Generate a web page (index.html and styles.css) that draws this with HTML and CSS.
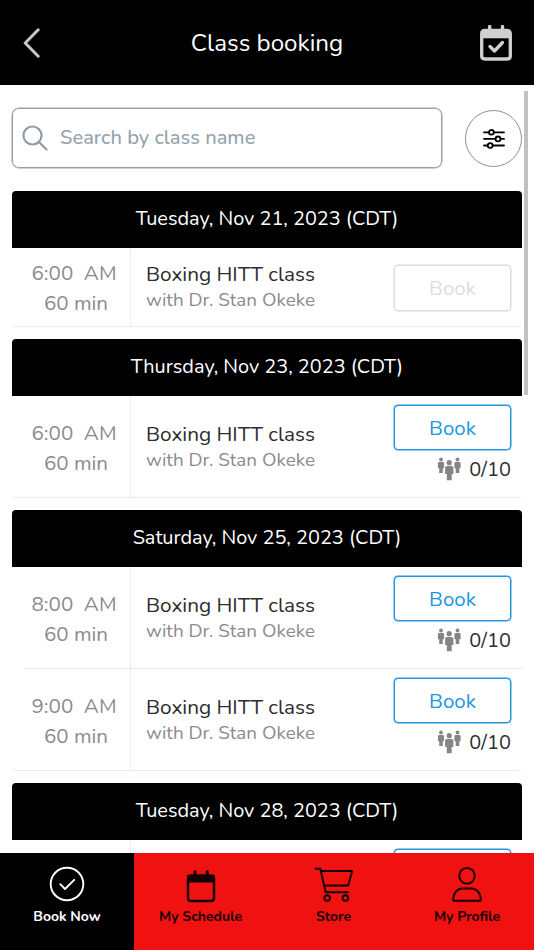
FILE: index.html
```html
<!DOCTYPE html>
<html lang="en">
<head>
    <meta charset="UTF-8">
    <meta name="viewport" content="width=device-width, initial-scale=1.0">
    <title>Class booking</title>
    <link rel="stylesheet" href="styles.css">
</head>
<body>
    <svg class="sprite" width="0" height="0">
        <symbol id="people" viewBox="0 0 24 24">
            <circle cx="4" cy="2.500" r="1.900"/>
            <path d="M2.200 4.900h3.600q1.300 0 1.300 1.300v5H5.800v4.800H2.200v-4.800H.9v-5q0-1.300 1.300-1.300z"/>
            <circle cx="20.500" cy="2.500" r="1.900"/>
            <path d="M18.700 4.900h3.600q1.300 0 1.300 1.300v5h-1.300v4.800h-3.600v-4.800h-1.300v-5q0-1.300 1.300-1.300z"/>
            <circle cx="12.200" cy="5.700" r="2.600"/>
            <path d="M9.900 9.100h4.600q1.900 0 1.900 1.800v6h-1.700v6.300H9.800v-6.300H8.100v-6q0-1.800 1.800-1.800z"/>
        </symbol>
    </svg>

    <header class="top-bar">
        <svg class="back" width="18" height="30" viewBox="0 0 18 30"><path d="M15.200 1.800L2.200 15l13 13.200"/></svg>
        <h1 class="page-title">Class booking</h1>
        <svg class="calendar-check" width="32" height="36" viewBox="0 0 32 36">
            <path d="M5 5.500h22q3.300 0 3.300 3.300v22.200q0 3-3.300 3H5q-3.300 0-3.300-3V8.800q0-3.300 3.300-3.300z"/>
            <path class="fill" d="M2 6h28v7.300H2z"/>
            <path d="M9.700 1.500v6M22.500 1.500v6"/>
            <path d="M10 21.500l4.500 4.500 8-8.500"/>
        </svg>
    </header>

    <main class="content">
        <div class="search-row">
            <div class="search">
                <svg width="26" height="26" viewBox="0 0 26 26"><circle cx="10.500" cy="10.500" r="9"/><path d="M17 17l7.500 7.500"/></svg>
                <span class="placeholder">Search by class name</span>
            </div>
            <button class="filter">
                <svg width="22" height="20" viewBox="0 0 22 20">
                    <path d="M1 3.300h20M1 9.900h20M1 16.500h20"/>
                    <circle cx="8.400" cy="3.300" r="2.400"/>
                    <circle cx="15" cy="9.900" r="2.400"/>
                    <circle cx="7.200" cy="16.500" r="2.400"/>
                </svg>
            </button>
        </div>

        <section class="day">
            <h2 class="day-title">Tuesday, Nov 21, 2023 (CDT)</h2>
            <div class="class-row past">
                <div class="time"><span>6:00&nbsp; AM</span><span class="length">60 min</span></div>
                <div class="info"><span class="name">Boxing HITT class</span><span class="coach">with Dr. Stan Okeke</span></div>
                <div class="action"><button class="book" disabled>Book</button></div>
            </div>
        </section>

        <section class="day">
            <h2 class="day-title">Thursday, Nov 23, 2023 (CDT)</h2>
            <div class="class-row">
                <div class="time"><span>6:00&nbsp; AM</span><span class="length">60 min</span></div>
                <div class="info"><span class="name">Boxing HITT class</span><span class="coach">with Dr. Stan Okeke</span></div>
                <div class="action">
                    <button class="book">Book</button>
                    <div class="spots"><svg width="24" height="24"><use href="#people"/></svg><span>0/10</span></div>
                </div>
            </div>
        </section>

        <section class="day">
            <h2 class="day-title">Saturday, Nov 25, 2023 (CDT)</h2>
            <div class="class-row">
                <div class="time"><span>8:00&nbsp; AM</span><span class="length">60 min</span></div>
                <div class="info"><span class="name">Boxing HITT class</span><span class="coach">with Dr. Stan Okeke</span></div>
                <div class="action">
                    <button class="book">Book</button>
                    <div class="spots"><svg width="24" height="24"><use href="#people"/></svg><span>0/10</span></div>
                </div>
            </div>
            <div class="class-row">
                <div class="time"><span>9:00&nbsp; AM</span><span class="length">60 min</span></div>
                <div class="info"><span class="name">Boxing HITT class</span><span class="coach">with Dr. Stan Okeke</span></div>
                <div class="action">
                    <button class="book">Book</button>
                    <div class="spots"><svg width="24" height="24"><use href="#people"/></svg><span>0/10</span></div>
                </div>
            </div>
        </section>

        <section class="day">
            <h2 class="day-title">Tuesday, Nov 28, 2023 (CDT)</h2>
            <div class="class-row">
                <div class="time"></div>
                <div class="info"></div>
                <div class="action"><button class="book"></button></div>
            </div>
        </section>
        <div class="scroll-thumb"></div>
    </main>

    <nav class="tabs">
        <a class="tab active">
            <svg width="40" height="40" viewBox="0 0 40 40"><circle cx="20" cy="20" r="16.300"/><path d="M13.300 20.200l4.700 4.800 9.200-9.200"/></svg>
            <span>Book Now</span>
        </a>
        <a class="tab">
            <svg width="40" height="40" viewBox="0 0 40 40">
                <path class="outline" d="M10 11.500h20q3 0 3 3V34q0 3-3 3H10q-3 0-3-3V14.500q0-3 3-3z"/>
                <path class="solid" d="M7 12h26v5.500H7z"/>
                <path class="heavy" d="M14 7.700V12M26.300 7.700V12"/>
            </svg>
            <span>My Schedule</span>
        </a>
        <a class="tab">
            <svg width="40" height="40" viewBox="0 0 40 40">
                <path d="M1.500 4.700h4.800l5.400 23.500H34M7 7h30.500q.7 0 .5.800L34.200 21.500H10"/>
                <circle cx="13.200" cy="34" r="2.800"/><circle cx="31.400" cy="34" r="2.800"/>
            </svg>
            <span>Store</span>
        </a>
        <a class="tab">
            <svg width="40" height="40" viewBox="0 0 40 40">
                <circle cx="20" cy="11.800" r="7.800"/>
                <path d="M15.500 24.500h9c5 0 9.300 4.500 9.300 11.500q0 .7-.8.700H7q-.8 0-.8-.7C6.200 29 10.500 24.500 15.500 24.500z"/>
            </svg>
            <span>My Profile</span>
        </a>
    </nav>
</body>
</html>
```

FILE: styles.css
```css
* {
    box-sizing: border-box;
}

body {
    margin: 0;
    height: 950px;
    display: flex;
    flex-direction: column;
    overflow: hidden;
    background: white;
    font-family: Nunito, Lato, sans-serif;
}

svg {
    display: block;
    flex: none;
    fill: none;
    stroke-linecap: round;
    stroke-linejoin: round;
}

.sprite {
    position: absolute;
}

button {
    font-family: inherit;
    padding: 0;
    background: white;
}

/* header */
.top-bar {
    height: 85px;
    flex: none;
    display: flex;
    justify-content: space-between;
    align-items: center;
    padding: 0 22px 0 23px;
    background: black;
}

.back {
    stroke: #c8c8c8;
    stroke-width: 3;
    margin-right: 13px;
}

.page-title {
    margin: 0;
    padding-top: 2px;
    color: white;
    font-size: 24.2px;
    font-weight: 400;
}

.calendar-check {
    stroke: #d0d0d0;
    stroke-width: 3.3;
}

.calendar-check .fill {
    fill: #d0d0d0;
    stroke: none;
}

/* list */
.content {
    flex: 1;
    min-height: 0;
    overflow: hidden;
    position: relative;
    padding: 23px 12px 0;
}

.search-row {
    display: flex;
    align-items: center;
    gap: 23px;
    margin-bottom: 23px;
}

.search {
    flex: 1;
    height: 60px;
    display: flex;
    align-items: center;
    gap: 12px;
    padding-left: 9px;
    border: 1px solid #94a3ab;
    border-radius: 7px;
    box-shadow: 0 0 0 0.5px #94a3ab;
}

.search svg {
    stroke: #8f9ea6;
    stroke-width: 2.2;
}

.placeholder {
    padding-bottom: 1px;
    color: #94a3ab;
    font-size: 20.1px;
    font-weight: 500;
}

.filter {
    width: 57px;
    height: 57px;
    display: flex;
    justify-content: center;
    align-items: center;
    padding-top: 1px;
    border: 1px solid #84959e;
    border-radius: 50%;
}

.filter svg {
    stroke: black;
    stroke-width: 1.8;
}

.filter circle {
    fill: white;
}

.day {
    margin-bottom: 12px;
    border-bottom: 1px solid #e6edef;
    border-radius: 4px;
    overflow: hidden;
}

.day-title {
    margin: 0;
    height: 57px;
    line-height: 55px;
    background: black;
    color: white;
    text-align: center;
    font-size: 19.9px;
    font-weight: 400;
}

.class-row {
    height: 101px;
    display: flex;
    padding-right: 11px;
    color: #2b2d2e;
}

.class-row.past {
    height: 78px;
}

.class-row + .class-row {
    margin-left: 12px;
    border-top: 1px solid #e6edef;
    height: 102px;
}

.class-row + .class-row .time {
    width: 107px;
    padding-left: 0;
    padding-right: 6px;
}

.time {
    width: 119px;
    padding-left: 6px;
    padding-top: 3px;
    flex: none;
    display: flex;
    flex-direction: column;
    justify-content: center;
    align-items: center;
    border-right: 1px dotted #d9e2e5;
    color: #8b8b8b;
    font-size: 20.6px;
    line-height: 30px;
}

.past .time {
    padding-top: 2px;
}

.length {
    margin-left: 4px;
}

.info {
    flex: 1;
    display: flex;
    flex-direction: column;
    justify-content: center;
    padding-left: 15px;
}

.past .info {
    padding-bottom: 1px;
}

.name {
    font-size: 20.8px;
    line-height: 27px;
}

.coach {
    color: #8b8b8b;
    font-size: 18.9px;
    line-height: 25px;
}

.action {
    width: 117px;
    padding-top: 9px;
}

.past .action {
    padding-top: 17px;
}

.book {
    display: block;
    width: 117px;
    height: 45px;
    border: 1px solid #2196e3;
    border-radius: 4px;
    box-shadow: 0 0 0 0.5px #2196e3;
    color: #2196e3;
    font-size: 20.5px;
}

.book:disabled {
    height: 46px;
    border-color: #dedede;
    box-shadow: 0 0 0 0.5px #dedede;
    color: #dedede;
}

.spots {
    display: flex;
    justify-content: flex-end;
    align-items: center;
    gap: 8px;
    height: 38px;
    font-size: 20px;
}

.spots svg {
    fill: #858585;
}

.scroll-thumb {
    position: absolute;
    top: 6px;
    right: 6px;
    width: 4px;
    height: 304px;
    background: #c1c1c1;
}

/* bottom tabs */
.tabs {
    flex: none;
    height: 97px;
    display: grid;
    grid-template-columns: 134px 133px 133px 134px;
    background: #f01111;
}

.tab {
    display: flex;
    flex-direction: column;
    align-items: center;
    padding-top: 11px;
    color: #120303;
    font-size: 14px;
    font-weight: 700;
    line-height: 26px;
}

.tab svg {
    stroke: currentColor;
    stroke-width: 1.9;
}

.tab .outline {
    stroke-width: 2.4;
}

.tab .heavy {
    stroke-width: 3;
}

.tab .solid {
    fill: currentColor;
}

.tab.active {
    background: black;
    color: white;
}
```
